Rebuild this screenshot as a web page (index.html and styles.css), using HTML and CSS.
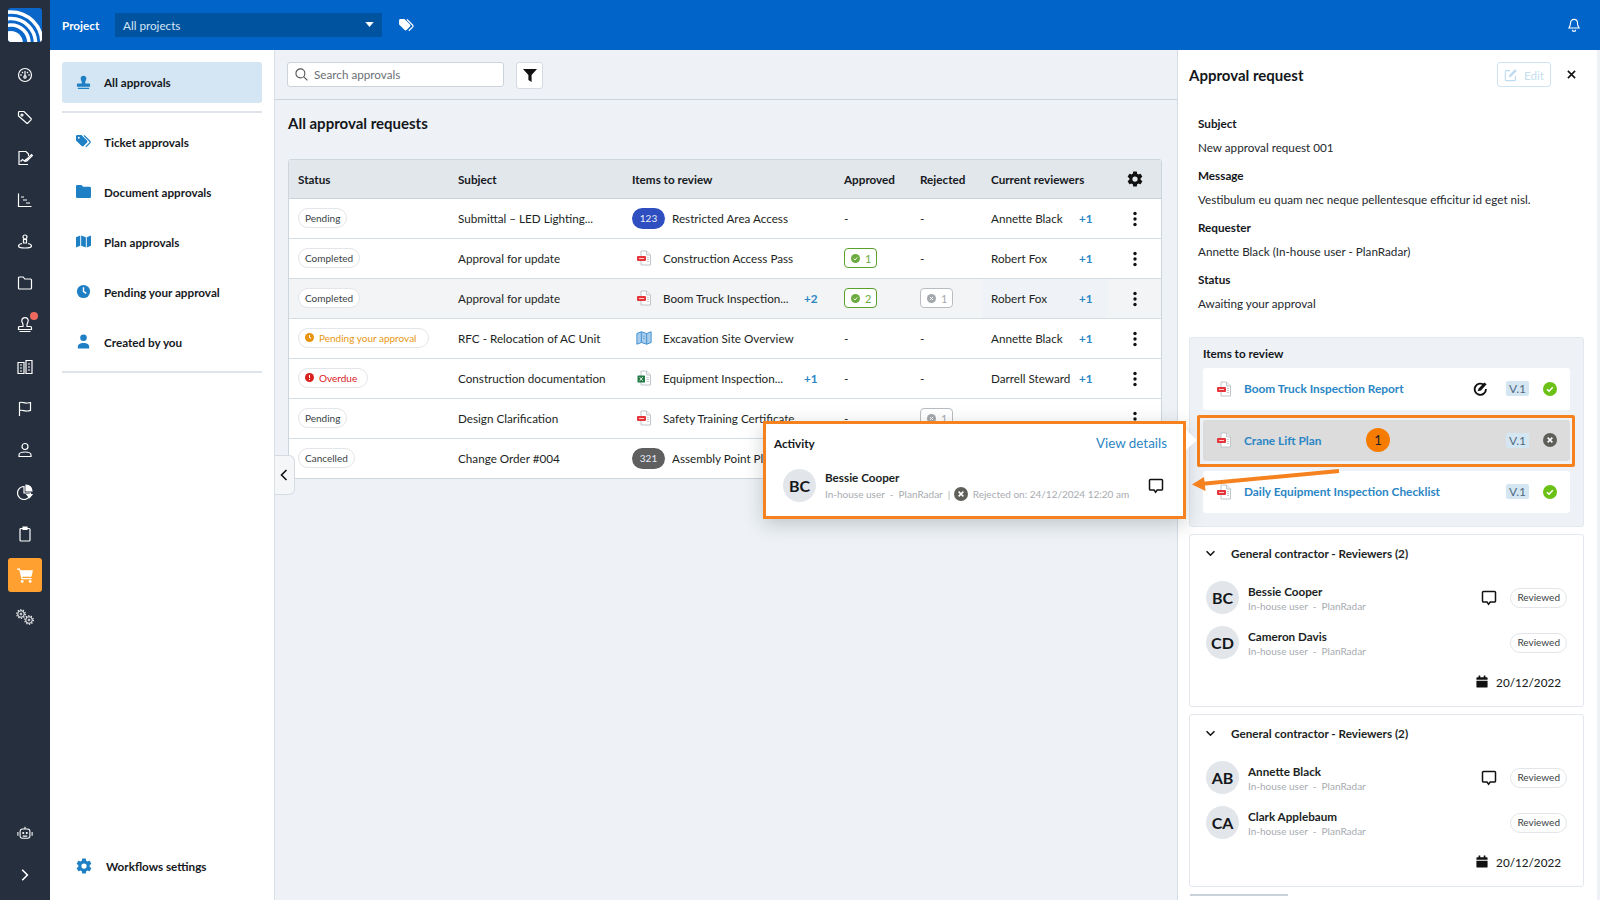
FILE: index.html
```html
<!DOCTYPE html>
<html lang="en">
<head>
<meta charset="utf-8">
<title>Approvals</title>
<link rel="stylesheet" href="styles.css">
</head>
<body>
<svg class="defs" width="0" height="0" aria-hidden="true">
  <symbol id="pdf" viewBox="0 0 16 16">
    <path d="M5 1h5.500L14.500 5v10H5z" fill="#fff" stroke="#b9bec4" stroke-width=".9"/>
    <path d="M10.500 1v4h4" fill="#eceef0" stroke="#b9bec4" stroke-width=".8"/>
    <rect x="1" y="6" width="9" height="5" rx="1" fill="#e5353b"/>
    <rect x="3" y="8" width="5" height="1" fill="#ffc9c9"/>
    <path d="M11 7.500h2M11 9.500h2M11 11.500h2" stroke="#b9bec4" stroke-width=".8"/>
  </symbol>
  <symbol id="xls" viewBox="0 0 16 16">
    <path d="M5 1h5.500L14.500 5v10H5z" fill="#fff" stroke="#b9bec4" stroke-width=".9"/>
    <path d="M10.500 1v4h4" fill="#eceef0" stroke="#b9bec4" stroke-width=".8"/>
    <rect x="1.500" y="5.500" width="7.500" height="7" rx=".6" fill="#1f7a44"/>
    <path d="M3.700 7.200l3 3.600M6.700 7.200l-3 3.600" stroke="#fff" stroke-width=".9"/>
    <path d="M10.500 7.500h2.500M10.500 9.500h2.500M10.500 11.500h2.500" stroke="#b9bec4" stroke-width=".8"/>
  </symbol>
  <symbol id="map" viewBox="0 0 18 16">
    <path d="M1 3l5-2 6 2 5-2v12l-5 2-6-2-5 2z" fill="#a8cdec" stroke="#3f8fd0" stroke-width="1.100"/>
    <path d="M6 1v12M12 3v12" stroke="#3f8fd0" stroke-width="1.100"/>
    <path d="M8 6h2M8 8.500h2" stroke="#3f8fd0" stroke-width=".7"/>
  </symbol>
  <symbol id="check" viewBox="0 0 16 16">
    <circle cx="8" cy="8" r="8" fill="currentColor"/>
    <path d="M4.500 8.300l2.400 2.300 4.300-4.600" fill="none" stroke="#fff" stroke-width="1.700"/>
  </symbol>
  <symbol id="cross" viewBox="0 0 16 16">
    <circle cx="8" cy="8" r="8" fill="currentColor"/>
    <path d="M5.300 5.300l5.400 5.400M10.700 5.300l-5.400 5.400" fill="none" stroke="#fff" stroke-width="1.700"/>
  </symbol>
  <symbol id="comment" viewBox="0 0 16 16">
    <path d="M2.600 1.500h10.800a1.100 1.100 0 0 1 1.100 1.100v8.300a1.100 1.100 0 0 1-1.100 1.100H9.200L7.600 14.200 6 12H2.600a1.100 1.100 0 0 1-1.100-1.100V2.600a1.100 1.100 0 0 1 1.100-1.100z" fill="none" stroke="#111" stroke-width="1.500"/>
  </symbol>
  <symbol id="calendar" viewBox="0 0 14 14">
    <path d="M3 0h2v2h4V0h2v2h1.500a1 1 0 0 1 1 1v2H.5V3a1 1 0 0 1 1-1H3zM.5 6h13v7a1 1 0 0 1-1 1h-11a1 1 0 0 1-1-1z" fill="#111"/>
  </symbol>
  <symbol id="chev" viewBox="0 0 12 8">
    <path d="M1.500 1.500L6 6l4.500-4.500" fill="none" stroke="#111" stroke-width="1.800"/>
  </symbol>
  <symbol id="kebab" viewBox="0 0 4 16">
    <circle cx="2" cy="2.500" r="1.700" fill="#111"/><circle cx="2" cy="8" r="1.700" fill="#111"/><circle cx="2" cy="13.500" r="1.700" fill="#111"/>
  </symbol>
  <symbol id="gear" viewBox="0 0 24 24">
    <path d="M19.400 13c.05-.33.1-.66.1-1s-.05-.67-.1-1l2.100-1.650a.5.5 0 0 0 .12-.64l-2-3.460a.5.5 0 0 0-.6-.22l-2.500 1a7.300 7.300 0 0 0-1.700-1l-.38-2.650A.5.5 0 0 0 14 2h-4a.5.5 0 0 0-.49.42L9.130 5.070a7.700 7.700 0 0 0-1.700 1l-2.490-1a.5.5 0 0 0-.6.22l-2 3.460a.5.5 0 0 0 .12.64L4.570 11c-.05.33-.07.66-.07 1s.02.67.07 1l-2.110 1.650a.5.500 0 0 0-.12.64l2 3.460c.12.22.38.3.6.22l2.490-1c.52.4 1.080.73 1.700 1l.38 2.650c.05.24.25.42.49.42h4c.24 0 .45-.18.49-.42l.38-2.650a7.300 7.300 0 0 0 1.700-1l2.490 1c.22.08.48 0 .6-.22l2-3.460a.5.500 0 0 0-.12-.64zM12 15.500a3.500 3.500 0 1 1 0-7 3.500 3.500 0 0 1 0 7z" fill="currentColor"/>
  </symbol>
</svg>

<div class="app">
  <aside class="rail">
    <svg class="logo" viewBox="0 0 34 34">
      <defs><clipPath id="logoclip"><rect width="34" height="34" rx="3"/></clipPath></defs>
      <g clip-path="url(#logoclip)">
        <rect width="34" height="34" fill="#0a66c8"/>
        <circle cx="3" cy="35" r="12" fill="#fff"/>
        <circle cx="3" cy="35" r="18" fill="none" stroke="#fff" stroke-width="3.600"/>
        <circle cx="3" cy="35" r="24.500" fill="none" stroke="#fff" stroke-width="3.600"/>
        <circle cx="3" cy="35" r="31" fill="none" stroke="#fff" stroke-width="3.600"/>
      </g>
    </svg>
    <nav class="rail-list">
      <a class="rail-item"><svg class="ri" viewBox="0 0 16 16"><circle cx="8" cy="8" r="6.500"/><path d="M8 4v5M3 8h2M11 8h2M5 5l1 1M11 5l-1 1"/><circle cx="8" cy="10" r="1.200"/></svg></a>
      <a class="rail-item"><svg class="ri" viewBox="0 0 16 16"><path d="M1.500 3.500a1 1 0 0 1 1-1H7l7 7a1 1 0 0 1 0 1.400L10.900 14a1 1 0 0 1-1.400 0l-8-7z"/><circle cx="5" cy="6" r="1"/></svg></a>
      <a class="rail-item"><svg class="ri" viewBox="0 0 16 16"><path d="M11 14.500H2V1.500h7l2.500 2.500v2"/><path d="M3.500 11.500l2-2 2 1.500 2-2M9 10l5.500-5.500 1 1L10 11l-1.500.3z"/></svg></a>
      <a class="rail-item"><svg class="ri" viewBox="0 0 16 16"><path d="M1.500 1.500v13h13M4 5h3M6 8h4M9 11h4"/></svg></a>
      <a class="rail-item"><svg class="ri" viewBox="0 0 16 16"><circle cx="8" cy="3" r="2"/><path d="M6.500 5.500h3L9.500 9h-3zM5 9.500c-2.500.6-3.500 1.500-3.500 2.500s2.800 2 6.500 2 6.500-1 6.500-2-1-1.900-3.500-2.500"/></svg></a>
      <a class="rail-item"><svg class="ri" viewBox="0 0 16 16"><path d="M1.500 3a1 1 0 0 1 1-1h3.700l1.600 2h5.700a1 1 0 0 1 1 1v8a1 1 0 0 1-1 1h-11a1 1 0 0 1-1-1z"/></svg></a>
      <a class="rail-item rail-stamp"><svg class="ri" viewBox="0 0 16 16"><path d="M6 8c0-2-1.200-2.500-1.200-4.200a3.200 3.200 0 0 1 6.400 0C11.200 5.500 10 6 10 8v1.500h3.500a1 1 0 0 1 1 1V12.500h-13v-2a1 1 0 0 1 1-1H6zM2.500 14.500h11"/></svg><span class="rail-dot"></span></a>
      <a class="rail-item"><svg class="ri" viewBox="0 0 16 16"><path d="M1 3.500h6v11H1zM9 1.500h6v13H9zM3 6h2M3 9h2M3 12h2M11 5h2M11 8h2M11 11h2"/></svg></a>
      <a class="rail-item"><svg class="ri" viewBox="0 0 16 16"><path d="M2.500 15V1.500c3-1 4.500 1 7.500.500 1.500-.2 3-.5 3.500-.5v8c-1 .2-2 .5-3.500.5-3 .3-4.500-1.500-7.500-.5"/></svg></a>
      <a class="rail-item"><svg class="ri" viewBox="0 0 16 16"><circle cx="8" cy="4.500" r="3"/><path d="M2 14.500v-1.500c0-1.600 2.500-3 6-3s6 1.400 6 3v1.500z"/></svg></a>
      <a class="rail-item"><svg class="ri" viewBox="0 0 16 16"><path d="M7 2.500a6.500 6.500 0 1 0 6.500 6.500H7z"/><path d="M9 1a6 6 0 0 1 6 6H9zM10 10.500h5l-2.500 3z" fill="#fff"/></svg></a>
      <a class="rail-item"><svg class="ri" viewBox="0 0 16 16"><rect x="3" y="2.500" width="10" height="12.500" rx="1"/><path d="M6 1h4v2.500H6z" fill="#fff"/></svg></a>
      <a class="rail-item rail-active"><svg class="ri-cart" viewBox="0 0 18 16"><path d="M0 .500h3l.7 2H17l-1.700 6.700H5.500l.4 1.500h9.600v1.300H4.800L2.300 1.800H0z" fill="#fff"/><circle cx="5.500" cy="14.300" r="1.500" fill="#fff"/><circle cx="14" cy="14.300" r="1.500" fill="#fff"/></svg></a>
      <a class="rail-item"><svg class="ri-gears" viewBox="0 0 18 16"><circle cx="5" cy="5" r="3.300" stroke-width="1"/><circle cx="5" cy="5" r="4.300" stroke-width="1.100" stroke-dasharray="1.300 1.400"/><circle cx="5" cy="5" r=".9" stroke-width=".9"/><circle cx="13" cy="11" r="3.300" stroke-width="1"/><circle cx="13" cy="11" r="4.300" stroke-width="1.100" stroke-dasharray="1.300 1.400"/><circle cx="13" cy="11" r=".9" stroke-width=".9"/></svg></a>
    </nav>
    <div class="rail-list rail-bottom">
      <a class="rail-item"><svg class="ri" viewBox="0 0 18 16"><rect x="3.500" y="3.500" width="11" height="10.500" rx="2.500"/><path d="M9 1v2.500M1 7v4M17 7v4M6.500 11.500h5"/><circle cx="7" cy="8" r=".6"/><circle cx="11" cy="8" r=".6"/></svg></a>
      <a class="rail-item"><svg class="ri-chev" viewBox="0 0 10 16"><path d="M1.500 1.500L8 8l-6.500 6.500" fill="none" stroke="#fff" stroke-width="2"/></svg></a>
    </div>
  </aside>

  <div class="workspace">
    <header class="topbar">
      <span class="top-label">Project</span>
      <div class="top-select"><span>All projects</span><svg class="caret" viewBox="0 0 10 6"><path d="M0 0h10L5 6z" fill="#fff"/></svg></div>
      <svg class="top-tag" viewBox="0 0 16 14"><path d="M0 1.500A1.500 1.500 0 0 1 1.500 0h4.300l6 6a1.500 1.500 0 0 1 0 2.100l-3.700 3.700a1.500 1.500 0 0 1-2.100 0L0 5.800z" fill="#fff"/><path d="M8.500 .5l6 6a1.600 1.600 0 0 1 0 2.200l-4 4" fill="none" stroke="#fff" stroke-width="1.300"/></svg>
      <svg class="top-bell" viewBox="0 0 14 16"><path d="M7 1.500a4 4 0 0 1 4 4c0 3.500 1 4.800 2 6H1c1-1.200 2-2.500 2-6a4 4 0 0 1 4-4zM5 13.500a2 2 0 0 0 4 0" fill="none" stroke="#fff" stroke-width="1.300"/></svg>
    </header>

    <div class="body">
      <aside class="side">
        <a class="side-item side-active">
          <svg class="side-ico" viewBox="0 0 16 16"><path d="M6.200 8C6.200 6.500 5 6 5 3.800a3 3 0 0 1 6 0C11 6 9.800 6.500 9.800 8v1H14a1 1 0 0 1 1 1v2.500H1V10a1 1 0 0 1 1-1h4.200zM2 13.500h12V15H2z" fill="#1e7fc4"/></svg>
          <span>All approvals</span>
        </a>
        <div class="side-rule"></div>
        <a class="side-item">
          <svg class="side-ico" viewBox="0 0 16 14"><path d="M0 1.500A1.500 1.500 0 0 1 1.500 0h4.300l6 6a1.500 1.500 0 0 1 0 2.100l-3.700 3.700a1.500 1.500 0 0 1-2.100 0L0 5.800z" fill="#1e7fc4"/><circle cx="3" cy="3" r="1" fill="#fff"/><path d="M8.500 .5l6 6a1.600 1.600 0 0 1 0 2.200l-4 4" fill="none" stroke="#1e7fc4" stroke-width="1.300"/></svg>
          <span>Ticket approvals</span>
        </a>
        <a class="side-item">
          <svg class="side-ico" viewBox="0 0 16 14"><path d="M0 1.500A1.500 1.500 0 0 1 1.500 0h4.300l1.700 2h7A1.500 1.500 0 0 1 16 3.500v9a1.500 1.500 0 0 1-1.500 1.500h-13A1.500 1.500 0 0 1 0 12.500z" fill="#1e7fc4"/></svg>
          <span>Document approvals</span>
        </a>
        <a class="side-item">
          <svg class="side-ico" viewBox="0 0 16 14"><path d="M0 2.500L4.500 .5v11L0 13.500zM5.500 .5l5 2v11l-5-2zM11.500 2.500L16 .5v11l-4.500 2z" fill="#1e7fc4"/></svg>
          <span>Plan approvals</span>
        </a>
        <a class="side-item">
          <svg class="side-ico" viewBox="0 0 16 16"><circle cx="8" cy="8" r="7" fill="#1e7fc4"/><path d="M8 3.500V8l3 2" fill="none" stroke="#fff" stroke-width="1.500"/></svg>
          <span>Pending your approval</span>
        </a>
        <a class="side-item">
          <svg class="side-ico" viewBox="0 0 16 16"><circle cx="8" cy="4" r="3.500" fill="#1e7fc4"/><path d="M2 15.500v-2.500c0-2 2.500-3.500 6-3.500s6 1.500 6 3.500v2.500z" fill="#1e7fc4"/></svg>
          <span>Created by you</span>
        </a>
        <div class="side-rule side-rule-end"></div>
        <a class="side-settings"><svg class="settings-ico"><use href="#gear"/></svg><span>Workflows settings</span></a>
      </aside>

      <main class="main">
        <div class="toolbar">
          <div class="search">
            <svg class="search-ico" viewBox="0 0 14 14"><circle cx="5.800" cy="5.800" r="4.800" fill="none" stroke="#555" stroke-width="1.200"/><path d="M9.300 9.300l4 4" stroke="#555" stroke-width="1.200"/></svg>
            <span>Search approvals</span>
          </div>
          <button class="filter" type="button"><svg viewBox="0 0 14 13"><path d="M0 0h14L8.600 6v7L5.400 11V6z" fill="#111"/></svg></button>
        </div>
        <div class="content">
          <h1 class="page-title">All approval requests</h1>
          <div class="table">
            <div class="row head">
              <div>Status</div><div>Subject</div><div>Items to review</div><div>Approved</div><div>Rejected</div><div>Current reviewers</div>
              <div class="act"><svg class="gear-h"><use href="#gear"/></svg></div>
            </div>
            <div class="row">
              <div><span class="chip">Pending</span></div><div>Submittal – LED Lighting...</div>
              <div class="item"><span class="count">123</span><span>Restricted Area Access</span></div>
              <div>-</div><div>-</div>
              <div class="rev"><span class="rev-name">Annette Black</span><span class="plus">+1</span></div>
              <div class="act"><svg class="kebab"><use href="#kebab"/></svg></div>
            </div>
            <div class="row">
              <div><span class="chip">Completed</span></div><div>Approval for update</div>
              <div class="item"><svg class="file"><use href="#pdf"/></svg><span>Construction Access Pass</span></div>
              <div><span class="tally ok"><svg><use href="#check"/></svg>1</span></div><div>-</div>
              <div class="rev"><span class="rev-name">Robert Fox</span><span class="plus">+1</span></div>
              <div class="act"><svg class="kebab"><use href="#kebab"/></svg></div>
            </div>
            <div class="row row-hover">
              <div><span class="chip">Completed</span></div><div>Approval for update</div>
              <div class="item"><svg class="file"><use href="#pdf"/></svg><span class="item-name">Boom Truck Inspection...</span><span class="plus">+2</span></div>
              <div><span class="tally ok"><svg><use href="#check"/></svg>2</span></div>
              <div><span class="tally no"><svg><use href="#cross"/></svg>1</span></div>
              <div class="rev rev-tint"><span class="rev-name">Robert Fox</span><span class="plus">+1</span></div>
              <div class="act"><svg class="kebab"><use href="#kebab"/></svg></div>
            </div>
            <div class="row">
              <div><span class="chip chip-orange"><svg viewBox="0 0 16 16"><circle cx="8" cy="8" r="8" fill="#e8930c"/><path d="M8 3.500V8l3 1.500" fill="none" stroke="#fff" stroke-width="1.800"/></svg>Pending your approval</span></div><div>RFC - Relocation of AC Unit</div>
              <div class="item"><svg class="file"><use href="#map"/></svg><span>Excavation Site Overview</span></div>
              <div>-</div><div>-</div>
              <div class="rev"><span class="rev-name">Annette Black</span><span class="plus">+1</span></div>
              <div class="act"><svg class="kebab"><use href="#kebab"/></svg></div>
            </div>
            <div class="row">
              <div><span class="chip chip-red"><svg viewBox="0 0 16 16"><circle cx="8" cy="8" r="8" fill="#d9211e"/><path d="M8 3.500v5.500M8 10.700v1.800" fill="none" stroke="#fff" stroke-width="1.800"/></svg>Overdue</span></div><div>Construction documentation</div>
              <div class="item"><svg class="file"><use href="#xls"/></svg><span class="item-name">Equipment Inspection...</span><span class="plus">+1</span></div>
              <div>-</div><div>-</div>
              <div class="rev"><span class="rev-name">Darrell Steward</span><span class="plus">+1</span></div>
              <div class="act"><svg class="kebab"><use href="#kebab"/></svg></div>
            </div>
            <div class="row">
              <div><span class="chip">Pending</span></div><div>Design Clarification</div>
              <div class="item"><svg class="file"><use href="#pdf"/></svg><span>Safety Training Certificate</span></div>
              <div>-</div>
              <div><span class="tally no"><svg><use href="#cross"/></svg>1</span></div>
              <div class="rev"></div>
              <div class="act"><svg class="kebab"><use href="#kebab"/></svg></div>
            </div>
            <div class="row row-last">
              <div><span class="chip">Cancelled</span></div><div>Change Order #004</div>
              <div class="item"><span class="count count-grey">321</span><span>Assembly Point Plan</span></div>
              <div></div><div></div><div></div><div></div>
            </div>
          </div>
        </div>
        <button class="collapse" type="button"><svg viewBox="0 0 8 12"><path d="M6.500 1L1.500 6l5 5" fill="none" stroke="#111" stroke-width="1.600"/></svg></button>
      </main>

      <section class="panel">
        <div class="panel-head">
          <h2>Approval request</h2>
          <span class="edit"><svg viewBox="0 0 16 16"><path d="M13 9v4.500a1 1 0 0 1-1 1H2.500a1 1 0 0 1-1-1V4a1 1 0 0 1 1-1H7" fill="none" stroke="#bfdcef" stroke-width="1.300"/><path d="M6 8l6.500-6.500 2 2L8 10l-2.500.5z" fill="#bfdcef"/></svg>Edit</span>
          <svg class="close" viewBox="0 0 10 10"><path d="M1 1l8 8M9 1l-8 8" stroke="#111" stroke-width="1.700"/></svg>
        </div>
        <dl class="facts">
          <dt>Subject</dt><dd>New approval request 001</dd>
          <dt>Message</dt><dd>Vestibulum eu quam nec neque pellentesque efficitur id eget nisl.</dd>
          <dt>Requester</dt><dd>Annette Black (In-house user - PlanRadar)</dd>
          <dt>Status</dt><dd>Awaiting your approval</dd>
        </dl>
        <div class="review-box">
          <h3>Items to review</h3>
          <div class="doc">
            <svg class="file"><use href="#pdf"/></svg><a>Boom Truck Inspection Report</a>
            <svg class="sign" viewBox="0 0 16 16"><path d="M12 4.500A6 6 0 1 0 13.800 8.500" fill="none" stroke="#111" stroke-width="2"/><path d="M5 11l1-3 6-6.500 2.500 2L8.500 10z" fill="#111"/></svg>
            <span class="ver">V.1</span><svg class="state st-ok"><use href="#check"/></svg>
          </div>
          <div class="doc doc-sel">
            <svg class="file"><use href="#pdf"/></svg><a>Crane Lift Plan</a>
            <span class="ver">V.1</span><svg class="state st-no"><use href="#cross"/></svg>
          </div>
          <div class="doc">
            <svg class="file"><use href="#pdf"/></svg><a>Daily Equipment Inspection Checklist</a>
            <span class="ver">V.1</span><svg class="state st-ok"><use href="#check"/></svg>
          </div>
        </div>

        <div class="group">
          <div class="group-head"><svg class="chev"><use href="#chev"/></svg><span>General contractor - Reviewers (2)</span></div>
          <div class="person"><span class="avatar">BC</span><div class="who"><b>Bessie Cooper</b><small>In-house user&nbsp; -&nbsp; PlanRadar</small></div><svg class="note"><use href="#comment"/></svg><span class="chip chip-rev">Reviewed</span></div>
          <div class="person"><span class="avatar">CD</span><div class="who"><b>Cameron Davis</b><small>In-house user&nbsp; -&nbsp; PlanRadar</small></div><span class="chip chip-rev">Reviewed</span></div>
          <div class="due"><svg><use href="#calendar"/></svg><span>20/12/2022</span></div>
        </div>
        <div class="group">
          <div class="group-head"><svg class="chev"><use href="#chev"/></svg><span>General contractor - Reviewers (2)</span></div>
          <div class="person"><span class="avatar">AB</span><div class="who"><b>Annette Black</b><small>In-house user&nbsp; -&nbsp; PlanRadar</small></div><svg class="note"><use href="#comment"/></svg><span class="chip chip-rev">Reviewed</span></div>
          <div class="person"><span class="avatar">CA</span><div class="who"><b>Clark Applebaum</b><small>In-house user&nbsp; -&nbsp; PlanRadar</small></div><span class="chip chip-rev">Reviewed</span></div>
          <div class="due"><svg><use href="#calendar"/></svg><span>20/12/2022</span></div>
        </div>
        <div class="panel-peek"></div>
      </section>
    </div>
  </div>

  <div class="popup">
    <div class="pop-head"><b>Activity</b><a>View details</a></div>
    <div class="pop-person">
      <span class="avatar">BC</span>
      <div class="who"><b>Bessie Cooper</b>
        <small class="pop-meta">In-house user&nbsp; -&nbsp; PlanRadar&nbsp; |&nbsp;<svg class="pop-x"><use href="#cross"/></svg>Rejected on: 24/12/2024 12:20 am</small>
      </div>
      <svg class="note"><use href="#comment"/></svg>
    </div>
  </div>
  <div class="pop-tip"></div>
  <div class="callout"></div>
  <span class="marker">1</span>
  <svg class="arrow" viewBox="0 0 148 24"><path d="M147 4L8 17" stroke="#f5821f" stroke-width="4" fill="none"/><path d="M0 17.500L12 10l1.500 14z" fill="#f5821f"/></svg>
</div>
</body>
</html>
```

FILE: styles.css
```css
* { box-sizing: border-box; }
html, body { margin: 0; height: 100%; }
body {
  font-family: "Lato", "Liberation Sans", sans-serif;
  font-size: 11.7px;
  color: #1c1f24;
  overflow: hidden;
  background: #fff;
}
.defs { position: absolute; }
.app { display: flex; height: 900px; width: 1600px; position: relative; overflow: hidden; }

/* rail */
.rail {
  width: 50px; flex: none; background: #252f3d;
  display: flex; flex-direction: column; align-items: center;
  padding: 8px 0;
}
.logo { width: 34px; height: 34px; flex: none; display: block; }
.rail-list { display: flex; flex-direction: column; gap: 7.7px; margin-top: 16px; }
.rail-bottom { margin-top: auto; }
.rail-item { width: 34px; height: 34px; display: flex; align-items: center; justify-content: center; border-radius: 3px; position: relative; }
.ri { width: 16px; height: 16px; fill: none; stroke: #fff; stroke-width: 1.200; }
.ri-gears { width: 18px; height: 16px; fill: none; stroke: #fff; }
.ri-cart { width: 17px; height: 15px; }
.ri-chev { width: 8px; height: 14px; }
.rail-active { background: #ffa031; }
.rail-dot { position: absolute; width: 8px; height: 8px; border-radius: 50%; background: #ee6a5f; top: 4px; right: 4px; }

/* workspace */
.workspace { flex: 1; display: flex; flex-direction: column; min-width: 0; }
.topbar { height: 50px; flex: none; background: #0064c8; color: #fff; display: flex; align-items: center; padding-left: 12px; }
.top-label { font-weight: 700; width: 53px; padding-bottom: 1px; }
.top-select { width: 267px; height: 24px; background: #00539f; display: flex; align-items: center; justify-content: space-between; padding: 0 8px 1px; color: #d6e6f6; }
.caret { width: 9px; height: 5px; }
.top-tag { width: 15px; height: 13px; margin-left: 17px; }
.top-bell { width: 12px; height: 14px; margin-left: auto; margin-right: 20px; }

.body { flex: 1; display: flex; min-height: 0; }

/* side */
.side { width: 225px; flex: none; background: #fff; border-right: 1px solid #d8e0e8; padding: 12px 12px 0; display: flex; flex-direction: column; font-weight: 700; color: #16191d; }
.side-item { height: 42px; display: flex; align-items: center; padding: 0 0 1px 14px; gap: 13px; margin-bottom: 8px; }
.side-active { background: #d4e6f3; border-radius: 3px; height: 41px; margin-bottom: 8px; }
.side-rule { height: 2px; background: #dfe4ea; margin-bottom: 8px; }
.side-ico { width: 15px; height: 15px; flex: none; }
.side-settings { margin-top: auto; display: flex; align-items: center; gap: 13px; padding: 0 0 25px 13px; }
.settings-ico { width: 18px; height: 18px; color: #1e7fc4; flex: none; }

/* main */
.main { flex: 1; background: #eef2f6; position: relative; min-width: 0; }
.toolbar { height: 50px; border-bottom: 1px solid #ccd5de; padding: 12px 0 0 12px; display: flex; gap: 12px; align-items: flex-start; }
.search { width: 217px; height: 25px; background: #fff; border: 1px solid #ccd3da; border-radius: 3px; display: flex; align-items: center; gap: 6px; padding: 0 0 1px 7px; color: #6b7075; }
.search-ico { width: 13px; height: 13px; flex: none; }
.filter { width: 27px; height: 27px; padding: 0; background: #fff; border: 1px solid #d5dbe1; border-radius: 3px; display: flex; align-items: center; justify-content: center; }
.filter svg { width: 14px; height: 13px; }
.content { padding: 13px 15px 0 13px; }
.page-title { font-size: 15px; font-weight: 700; margin: 0 0 26px; line-height: 20px; color: #14171b; }

.table { border: 1px solid #cdd5dd; border-radius: 3px; background: #fff; width: 874px; }
.row { display: grid; grid-template-columns: 160px 174px 212px 76px 71px 126px 1fr; height: 40px; align-items: center; border-bottom: 1px solid #d4dce4; }
.row > div { padding: 0 0 1px 9px; white-space: nowrap; }
.row-last { border-bottom: 0; height: 39px; }
.head { height: 39px; background: #e2e7ec; font-weight: 700; color: #16191d; border-bottom: 1px solid #c9d1d9; }
.row-hover { background: #f3f4f5; }
.row .rev-tint { align-self: stretch; background: #eff3f7; display: flex; align-items: center; }
.row .act { padding: 0; display: flex; justify-content: center; }
.gear-h { width: 18px; height: 18px; color: #111; }
.kebab { width: 4px; height: 16px; }
.chip { display: inline-flex; align-items: center; gap: 5px; height: 20px; padding: 0 6px 1px; border: 1px solid #e2e5e9; border-radius: 10px; background: #fff; font-size: 10px; color: #3a3f45; vertical-align: middle; }
.chip svg { width: 9px; height: 9px; flex: none; }
.chip-orange { color: #e8980f; padding-right: 12px; }
.chip-red { color: #d9211e; padding-right: 10px; }
.item { display: flex; align-items: center; }
.count { width: 33px; height: 21px; border-radius: 11px; background: #2f4fc0; color: #e8edfb; font-size: 10px; display: flex; align-items: center; justify-content: center; margin-right: 7px; flex: none; }
.count-grey { background: #5f5f5f; }
.file { width: 16px; height: 16px; flex: none; margin: 0 11px 0 4px; }
.item-name { width: 141px; }
.rev { display: flex; align-items: center; }
.rev-name { width: 88px; }
.plus { color: #2b86c5; font-weight: 700; }
.tally { display: inline-flex; align-items: center; gap: 5px; height: 20px; width: 33px; padding-left: 6px; border-radius: 4px; border: 1px solid #5aa02c; color: #6cab3f; font-size: 11px; background: #fff; vertical-align: middle; }
.tally svg { width: 9px; height: 9px; }
.tally.no { border-color: #b9bdc2; color: #a4a8ac; }
.collapse { position: absolute; left: 0; top: 405px; width: 20px; height: 40px; padding: 0 0 0 5px; background: #f4f6f8; border: 1px solid #d5dbe1; border-left: 0; border-radius: 0 6px 6px 0; display: flex; align-items: center; }
.collapse svg { width: 8px; height: 12px; }

/* panel */
.panel { width: 423px; flex: none; background: #fff; border-left: 1px solid #d4dce4; border-right: 3px solid #eef2f6; padding: 0 13px 0 11px; overflow: hidden; }
.panel-head { height: 50px; display: flex; align-items: center; padding-bottom: 1px; }
.panel-head h2 { font-size: 15px; font-weight: 700; margin: 0; color: #14171b; flex: 1; }
.edit { width: 54px; height: 25px; border: 1px solid #cfe4f2; border-radius: 3px; display: flex; align-items: center; justify-content: center; gap: 6px; color: #c5dff0; font-size: 11.7px; }
.edit svg { width: 14px; height: 14px; }
.close { width: 9px; height: 9px; margin: 0 8px 0 16px; }
.facts { margin: 12px 0 0 9px; height: 225px; line-height: 16px; }
.facts dt { font-weight: 700; color: #14171b; margin: 0 0 8px; padding-top: 3px; }
.facts dd { margin: 0 0 8px; color: #24282d; height: 17px; }
.review-box { background: #eef2f6; border: 1px solid #e3e8ee; border-radius: 3px; height: 190px; padding: 8px 13px; margin-bottom: 7px; }
.review-box h3 { font-size: 11.7px; font-weight: 700; margin: 0 0 6px; line-height: 15px; padding-bottom: 1px; color: #14171b; }
.doc { height: 42px; background: #fff; border-radius: 3px; display: flex; align-items: center; padding: 0 0 1px 13px; margin-bottom: 10px; }
.doc .file { margin: 0 12px 0 0; width: 16px; height: 16px; }
.doc a { color: #2b86c5; font-weight: 700; flex: 1; font-size: 11.85px; }
.doc-sel { background: #dcdcdc; height: 41px; }
.sign { width: 15px; height: 15px; margin-right: 18px; }
.ver { background: #d5e6f3; color: #4f6a80; font-size: 12px; padding: 0 3px; height: 15px; line-height: 15px; border-radius: 2px; margin-right: 14px; }
.state { width: 14px; height: 14px; margin-right: 13px; }
.st-ok { color: #6cc117; }
.st-no { color: #5f5f5a; }

.group { border: 1px solid #e3e8ee; border-radius: 3px; height: 173px; padding: 0 16px; margin-bottom: 7px; }
.group-head { height: 37px; margin-bottom: 3px; display: flex; align-items: center; gap: 15px; font-weight: 700; color: #1c1f24; margin-left: -1px; padding-bottom: 1px; }
.chev { width: 11px; height: 7px; flex: none; }
.person { height: 45px; display: flex; align-items: center; position: relative; }
.avatar { width: 33px; height: 33px; border-radius: 50%; background: #e2e6ea; color: #14171b; font-weight: 700; font-size: 16px; display: flex; align-items: center; justify-content: center; flex: none; }
.who { margin-left: 9px; flex: 1; min-width: 0; display: flex; flex-direction: column; padding-top: 2px; }
.who b { font-weight: 700; line-height: 15px; color: #1c1f24; }
.who small { font-size: 10px; line-height: 15px; color: #a7abb0; white-space: nowrap; }
.note { width: 16px; height: 16px; flex: none; }
.person .note { margin-right: 13px; }
.chip-rev { height: 20px; padding: 0 6px 1px; color: #3a3f45; }
.due { height: 34px; display: flex; align-items: center; justify-content: flex-end; gap: 8px; padding: 0 6px 1px 0; font-weight: 500; }
.due svg { width: 12px; height: 13px; }
.panel-peek { width: 98px; height: 2px; background: #c9d2da; margin: 6px 0 0 1px; }

/* overlays */
.popup {
  position: absolute; left: 763px; top: 421px; width: 423px; height: 98px;
  background: #fff; border: 3px solid #f5821f; box-shadow: 0 5px 18px rgba(30,40,50,.22);
  padding: 10px 16px 0 8px; z-index: 3;
}
.pop-head { display: flex; justify-content: space-between; align-items: center; height: 17px; margin-bottom: 18px; }
.pop-head b { font-weight: 700; color: #14171b; }
.pop-head a { color: #2b86c5; font-size: 13.4px; }
.pop-person { display: flex; align-items: center; padding-left: 9px; }
.pop-person .avatar { width: 33px; height: 33px; }
.pop-person .note { margin-right: 3px; }
.pop-person .who { padding-top: 0; }
.pop-person .who b { margin-bottom: 2px; }
.pop-meta { display: flex; align-items: center; }
.pop-x { width: 14px; height: 14px; color: #5f5f5a; margin: 0 5px 0 1px; flex: none; }
.pop-tip { position: absolute; left: 1186px; top: 430px; border-left: 11px solid #fff; border-top: 10px solid transparent; border-bottom: 10px solid transparent; z-index: 3; }
.callout { position: absolute; left: 1197px; top: 415px; width: 378px; height: 52px; border: 3px solid #f5821f; border-radius: 2px; z-index: 2; }
.marker { position: absolute; left: 1366px; top: 428px; width: 24px; height: 24px; border-radius: 50%; background: #f57c00; color: #1c1f24; display: flex; align-items: center; justify-content: center; font-size: 13px; z-index: 4; }
.arrow { position: absolute; left: 1192px; top: 467px; width: 148px; height: 24px; z-index: 4; }
```
